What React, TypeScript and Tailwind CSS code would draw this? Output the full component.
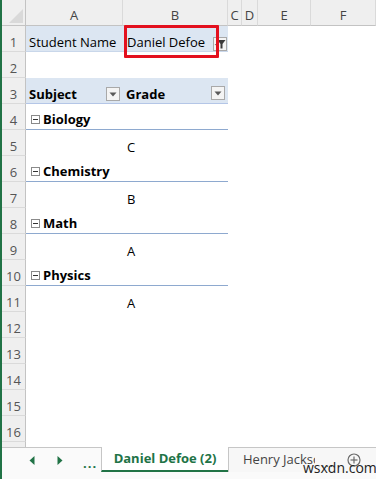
import React from "react";

type Row =
  | { n: number; kind: "blank" }
  | { n: number; kind: "filter" }
  | { n: number; kind: "header" }
  | { n: number; kind: "group"; label: string }
  | { n: number; kind: "value"; value: string };

const rows: Row[] = [
  { n: 1, kind: "filter" },
  { n: 2, kind: "blank" },
  { n: 3, kind: "header" },
  { n: 4, kind: "group", label: "Biology" },
  { n: 5, kind: "value", value: "C" },
  { n: 6, kind: "group", label: "Chemistry" },
  { n: 7, kind: "value", value: "B" },
  { n: 8, kind: "group", label: "Math" },
  { n: 9, kind: "value", value: "A" },
  { n: 10, kind: "group", label: "Physics" },
  { n: 11, kind: "value", value: "A" },
  { n: 12, kind: "blank" },
  { n: 13, kind: "blank" },
  { n: 14, kind: "blank" },
  { n: 15, kind: "blank" },
  { n: 16, kind: "blank" },
];

function DropBtn() {
  return (
    <div className="flex h-[14px] w-[14px] items-center justify-center border border-[#a9a9a9] bg-[#f4f4f4]">
      <svg width="8" height="5" viewBox="0 0 8 5">
        <polygon points="0.5,0.5 7.5,0.5 4,4.5" fill="#595959" />
      </svg>
    </div>
  );
}

function FilterBtn() {
  return (
    <div className="flex h-[14px] w-[14px] items-center justify-center border border-[#a9a9a9] bg-[#f4f4f4]">
      <svg width="12" height="10" viewBox="0 0 12 10">
        <polygon points="0.5,5 3.5,5 2,6.5" fill="#777" />
        <polygon points="3.5,1 11.5,1 8.5,5 8.5,9.5 6.5,9.5 6.5,5" fill="#3a3a3a" />
      </svg>
    </div>
  );
}

function MinusBox() {
  return (
    <svg width="9" height="9" viewBox="0 0 9 9" className="mb-[5px] mr-[3px] shrink-0">
      <rect x="0.5" y="0.5" width="8" height="8" fill="#fff" stroke="#8a8a8a" />
      <line x1="2" y1="4.5" x2="7" y2="4.5" stroke="#333" />
    </svg>
  );
}

const rowHead =
  "flex items-end justify-center border-b border-r border-b-[#dadada] border-r-[#c3c3c3] bg-[#efefef] text-[13px] leading-[18px] text-[#555]";

export default function App() {
  const blue = "bg-[#dce6f2]";
  return (
    <div className="flex h-[479px] w-[376px] overflow-hidden bg-white font-['Open_Sans',sans-serif] text-[13px] text-black">
      <div className="w-[2px] shrink-0 bg-[#217346]" />
      <div className="flex min-w-0 flex-1 flex-col">
        <div className="relative grid h-[447px] grid-cols-[24px_97px_105px_14px_16px_53px_1fr] grid-rows-[26px_repeat(16,26px)_5px] overflow-hidden">
          {/* header row */}
          <div className="relative border-b border-r border-b-[#c3c3c3] border-r-[#c3c3c3] bg-[#efefef]">
            <svg width="14" height="14" viewBox="0 0 14 14" className="absolute bottom-[2px] right-[2px]">
              <polygon points="14,0 14,14 0,14" fill="#d9d9d9" />
            </svg>
          </div>
          {["A", "B", "C", "D", "E", "F"].map((c) => (
            <div
              key={c}
              className="flex items-end justify-center border-b border-r border-b-[#c3c3c3] border-r-[#dadada] bg-[#efefef] pb-[1px] text-[13px] leading-[18px] text-[#444]"
            >
              {c}
            </div>
          ))}

          {rows.map((r) => (
            <React.Fragment key={r.n}>
              <div className={rowHead}>{r.n}</div>
              {r.kind === "filter" && (
                <>
                  <div className={`flex items-end border-b border-[#c9d7ea] ${blue} pl-[3px] leading-[18px]`}>
                    Student Name
                  </div>
                  <div className={`flex items-end justify-between border-b border-[#c9d7ea] ${blue} pl-[4px] pr-[1px] leading-[18px]`}>
                    <span>Daniel Defoe</span>
                    <div>
                      <FilterBtn />
                    </div>
                  </div>
                </>
              )}
              {r.kind === "header" && (
                <>
                  <div className={`flex items-end justify-between border-b border-[#b4c6e7] ${blue} pl-[3px] pr-[3px] font-bold leading-[18px]`}>
                    <span>Subject</span>
                    <div className="mb-[2px]">
                      <DropBtn />
                    </div>
                  </div>
                  <div className={`flex items-end justify-between border-b border-[#b4c6e7] ${blue} pl-[3px] pr-[3px] font-bold leading-[18px]`}>
                    <span>Grade</span>
                    <div className="mb-[3px]">
                      <DropBtn />
                    </div>
                  </div>
                </>
              )}
              {r.kind === "group" && (
                <>
                  <div className="flex items-end border-b border-[#8ea9cf] pl-[5px] font-bold leading-[18px]">
                    <MinusBox />
                    <span className="mb-[1px]">{r.label}</span>
                  </div>
                  <div className="border-b border-[#8ea9cf]" />
                </>
              )}
              {r.kind === "value" && (
                <>
                  <div />
                  <div className="flex items-end pl-[4px] leading-[18px]">{r.value}</div>
                </>
              )}
              {r.kind === "blank" && (
                <>
                  <div />
                  <div />
                </>
              )}
              <div />
              <div />
              <div />
              <div />
            </React.Fragment>
          ))}
          {/* partial row 17 */}
          <div className="border-r border-r-[#c3c3c3] bg-[#efefef]" />
          <div className="col-span-6" />

          {/* annotation */}
          <div className="pointer-events-none absolute left-[122px] top-[25px] h-[33px] w-[95px] rounded-[1px] border-[3px] border-[#e3101e]" />
        </div>

        {/* sheet tab bar */}
        <div className="relative flex h-[32px] bg-[#fafafa]">
          <div className="flex h-[25px] w-[99px] shrink-0 items-center border-t border-[#c6c6c6]">
            <svg width="6" height="9" viewBox="0 0 6 9" className="ml-[27px]">
              <polygon points="5.5,0 5.5,9 0.5,4.5" fill="#217346" />
            </svg>
            <svg width="6" height="9" viewBox="0 0 6 9" className="ml-[22px]">
              <polygon points="0.5,0 0.5,9 5.5,4.5" fill="#217346" />
            </svg>
            <span className="ml-[20px] mt-[6px] text-[13px] font-bold leading-none tracking-[1px] text-[#217346]">...</span>
          </div>
          <div className="flex h-[25px] w-[127px] shrink-0 items-center justify-center border-b-2 border-l border-b-[#217346] border-l-[#c6c6c6] bg-white text-[13px] font-bold text-[#217346]">
            Daniel Defoe (2)
          </div>
          <div className="flex h-[25px] flex-1 items-center border-l border-t border-[#c6c6c6] bg-[#f7f7f7] pl-[14px] text-[13px] text-[#444]">
            <span className="w-[72px] overflow-hidden whitespace-nowrap">Henry Jackson</span>
            <span className="ml-[6px] mt-[4px] leading-none tracking-[1px] text-[#555]">...</span>
            <svg width="14" height="14" viewBox="0 0 14 14" className="ml-[13px]">
              <circle cx="7" cy="7" r="6" fill="none" stroke="#6a6a6a" strokeWidth="1.2" />
              <line x1="7" y1="3.5" x2="7" y2="10.5" stroke="#6a6a6a" strokeWidth="1.2" />
              <line x1="3.5" y1="7" x2="10.5" y2="7" stroke="#6a6a6a" strokeWidth="1.2" />
            </svg>
          </div>
          <span className="absolute left-[301px] top-[13px] text-[14px] leading-[16px] text-[#222]">wsxdn.com</span>
        </div>
      </div>
    </div>
  );
}
